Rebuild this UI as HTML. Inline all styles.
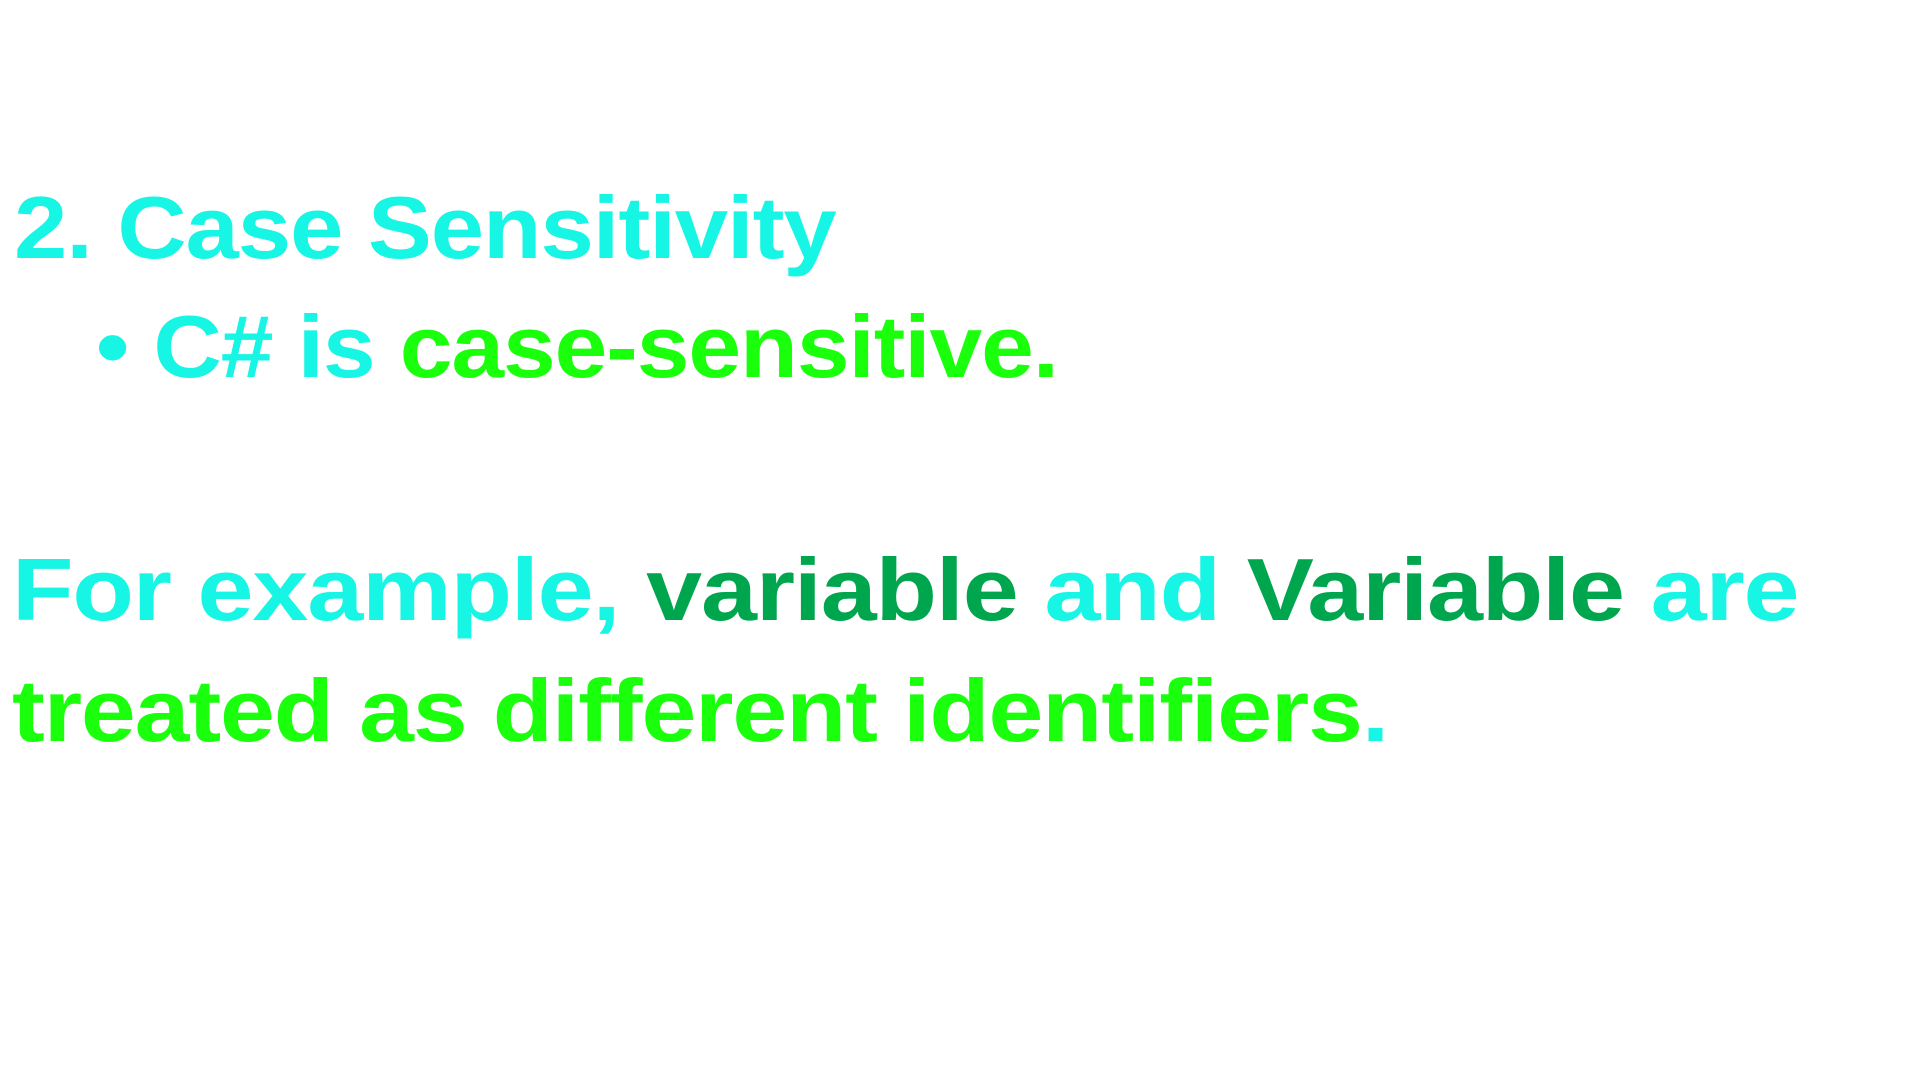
<!DOCTYPE html>
<html><head><meta charset="utf-8">
<style>
html,body{margin:0;padding:0;background:#fff;width:1920px;height:1080px;overflow:hidden}
body{font-family:"Liberation Sans",sans-serif;font-weight:bold;position:relative}
.l{position:absolute;white-space:nowrap;font-size:88px;line-height:1;letter-spacing:-1px;transform-origin:0 0}
.c{color:#17F5E4}.g{color:#1AFF0C}.d{color:#00A64E}
</style></head><body>
<div class="l c" style="left:14px;top:184px;transform:scaleX(1.09)">2. Case Sensitivity</div>
<div class="l" style="left:96px;top:303px;transform:scaleX(1.077)"><span class="c">•&nbsp;C# is </span><span class="g">case-sensitive.</span></div>
<div class="l" style="left:12px;top:546px;transform:scaleX(1.144)"><span class="c">For example, </span><span class="d">variable</span><span class="c"> and </span><span class="d">Variable</span><span class="c"> are</span></div>
<div class="l g" style="left:12px;top:667px;transform:scaleX(1.12)">treated as different identifiers<span class="c">.</span></div>
</body></html>
